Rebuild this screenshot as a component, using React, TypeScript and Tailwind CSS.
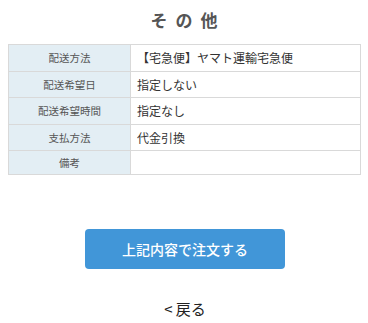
export default function App() {
  const rows: { label: string; value: string; h: string }[] = [
    { label: "配送方法", value: "【宅急便】ヤマト運輸宅急便", h: "h-[26px]" },
    { label: "配送希望日", value: "指定しない", h: "h-[25px]" },
    { label: "配送希望時間", value: "指定なし", h: "h-[26px]" },
    { label: "支払方法", value: "代金引換", h: "h-[25px]" },
    { label: "備考", value: "", h: "h-[23px]" },
  ];
  return (
    <div
      className="w-[368px] h-[323px] bg-white overflow-hidden"
      style={{ fontFamily: '"Noto Sans CJK JP", "Noto Sans", sans-serif' }}
    >
      <div className="pt-[8px] h-[44px] text-center">
        <h2 className="text-[17px] leading-[24px] font-bold text-[#555555] tracking-[8px] pl-[8px]">
          その他
        </h2>
      </div>
      <div className="ml-[8px] w-[353px] border border-[#d9d9d9]">
        {rows.map((r, i) => (
          <div
            key={r.label}
            className={`flex ${i > 0 ? "border-t border-[#d9d9d9]" : ""}`}
          >
            <div
              className={`${r.h} w-[122px] shrink-0 bg-[#e3eef4] border-r border-[#d9d9d9] flex items-center justify-center text-[10.5px] text-[#555555]`}
            >
              {r.label}
            </div>
            <div className="flex-1 flex items-center pl-[6px] text-[12px] text-[#333333]">
              {r.value}
            </div>
          </div>
        ))}
      </div>
      <div className="flex mt-[54px] pl-[85px]">
        <button className="w-[200px] h-[40px] rounded-[4px] bg-[#4196d8] text-white text-[14px] font-medium">
          上記内容で注文する
        </button>
      </div>
      <div className="flex justify-center mt-[30px] pl-[2px]">
        <a className="text-[15px] leading-[20px] text-[#222222] flex items-center gap-[3px]">
          <span>&lt;</span>
          <span>戻る</span>
        </a>
      </div>
    </div>
  );
}
